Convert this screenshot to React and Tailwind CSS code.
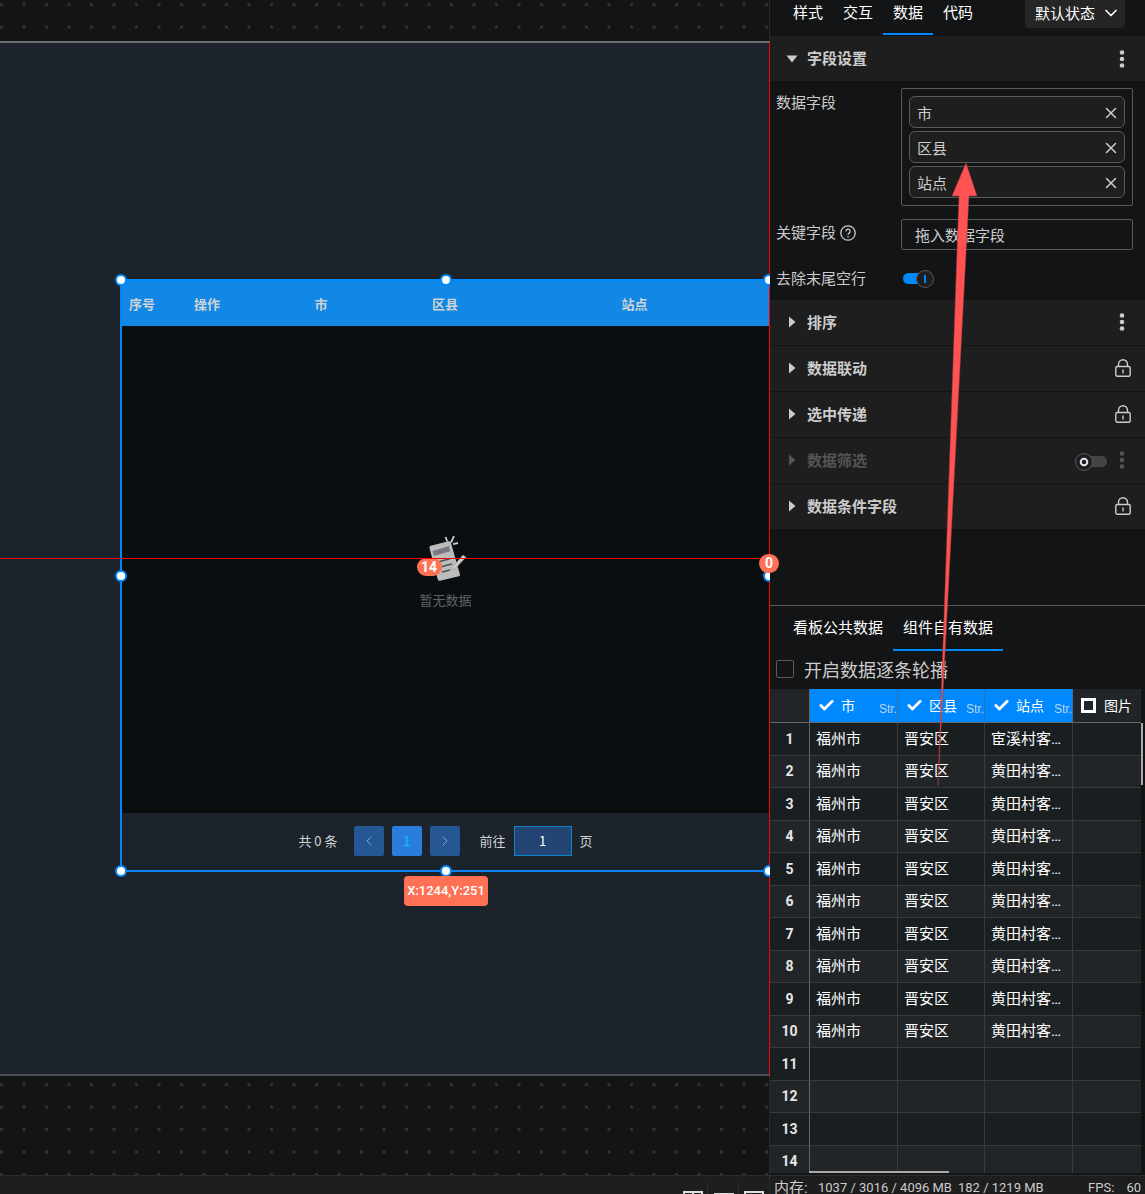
import { Check, ChevronDown, ChevronLeft, ChevronRight, X } from "lucide-react";

const stateTabs = ["样式", "交互", "数据", "代码"];
const dataTabs = ["看板公共数据", "组件自有数据"];
const fields = ["市", "区县", "站点"];

const sections = [
  { title: "排序", action: "menu" },
  { title: "数据联动", action: "lock" },
  { title: "选中传递", action: "lock" },
  { title: "数据筛选", action: "toggle" },
  { title: "数据条件字段", action: "lock" },
];

const columns = [
  { name: "市", checked: true },
  { name: "区县", checked: true },
  { name: "站点", checked: true },
  { name: "图片", checked: false },
];

const rows = Array.from({ length: 14 }, (_, i) => {
  if (i > 9) return ["", "", "", ""];
  return ["福州市", "晋安区", i === 0 ? "宦溪村客运站" : "黄田村客运站", ""];
});

function DotsIcon() {
  return (
    <svg viewBox="0 0 6 18" className="h-[18px] w-[6px]" fill="currentColor">
      <circle cx="3" cy="2.5" r="2.3" />
      <circle cx="3" cy="9" r="2.3" />
      <circle cx="3" cy="15.5" r="2.3" />
    </svg>
  );
}

function LockIcon() {
  return (
    <svg viewBox="0 0 16 18" className="h-[18px] w-4" fill="none" stroke="currentColor" strokeWidth="1.4">
      <rect x="0.8" y="7.5" width="14.4" height="9.8" rx="1.5" />
      <path d="M3.5 7.5V5.2a4.5 4.5 0 0 1 9 0v2.3M8 10.5v4" />
    </svg>
  );
}

function Arrow({ open }) {
  return open ? (
    <svg viewBox="0 0 12 8" className="h-2 w-3" fill="currentColor">
      <path d="M0.5 0.5h11L6 7.5z" />
    </svg>
  ) : (
    <svg viewBox="0 0 12 12" className="h-3 w-3" fill="currentColor">
      <path d="M3 0.5v11L9.5 6z" />
    </svg>
  );
}

function EmptyIcon() {
  return (
    <svg viewBox="0 0 50 46" className="h-[46px] w-[50px]">
      <path d="M8.500 12q-.5-1.800 1.300-2.300L27.500 5.200q1.800-.4 2.300 1.400L39 38.500q.3 1.400-1.100 1.800L19 44.800q-1.700.3-2.200-1.300z" fill="#bcbcbc" />
      <path d="M11.500 15l16.500-5 1.400 5.200L13 19.800z" fill="#777a80" />
      <path d="M15 26.500l14-3.800M19 31l12-3M21 36l8-2" stroke="#4c4f54" strokeWidth="1.5" fill="none" />
      <path d="M31 31.500L42 19l3 2.200-11 11.500-4 1.600z" fill="#cdcdcd" stroke="#8a8a8a" strokeWidth="0.5" />
      <path d="M24.500 1l1.800 4.500M33 0l-3 6.500M37 7l-5 1.200" stroke="#c9c9c9" strokeWidth="1.8" />
    </svg>
  );
}

function Handle({ className }) {
  return <i className={`absolute size-3 rounded-full border-2 border-[#0088ff] bg-white ${className}`} />;
}

function BoardTable() {
  return (
    <div className="relative flex flex-col border-b-2 border-l-2 border-[#0a84f5] bg-[#0a0e11] text-[13px]">
      <table className="w-full table-fixed bg-[#1187e6] text-[#cfd3d6]">
        <colgroup>
          <col className="w-[40px]" />
          <col className="w-[90px]" />
          <col className="w-[138px]" />
          <col className="w-[110px]" />
          <col />
        </colgroup>
        <thead>
          <tr className="h-[46px] border-t-2 border-[#0088ff]">
            {["序号", "操作", "市", "区县", "站点"].map((name) => (
              <th key={name} className="whitespace-nowrap font-bold">{name}</th>
            ))}
          </tr>
        </thead>
      </table>
      <div className="flex h-[487px] flex-col items-center justify-center gap-2 pt-1.5">
        <div className="relative">
          <EmptyIcon />
          <span className="absolute top-[22px] -left-1 h-[18px] w-[25px] rounded-full bg-[#ff7154] text-center font-[Roboto,sans-serif] text-sm leading-[18px] font-bold text-white">
            14
          </span>
        </div>
        <p className="text-[#5f6467]">暂无数据</p>
      </div>
      <div className="flex h-[57px] items-center justify-center bg-[#1c232a] pb-0.5 text-[#cfd3d6]">
        <span>共 0 条</span>
        <div className="mr-5 ml-4 flex gap-2">
          <button aria-label="上一页" className="flex size-[30px] items-center justify-center rounded-xs bg-[#265795] text-[#8ba5c9]">
            <ChevronLeft size={16} strokeWidth={1.5} />
          </button>
          <button className="size-[30px] rounded-xs bg-[#287ddd] text-[#12c8ff]">1</button>
          <button aria-label="下一页" className="flex size-[30px] items-center justify-center rounded-xs bg-[#265795] text-[#8ba5c9]">
            <ChevronRight size={16} strokeWidth={1.5} />
          </button>
        </div>
        <label className="flex items-center gap-2">
          前往
          <input defaultValue="1" className="h-[30px] w-[58px] border border-[#0b86cc] bg-[#234573] text-center text-white" />
          页
        </label>
      </div>
      <Handle className="-top-[5px] -left-[7px]" />
      <Handle className="-top-[5px] left-[318px]" />
      <Handle className="-top-[5px] -right-[6px]" />
      <Handle className="top-[291px] -left-[7px]" />
      <Handle className="top-[291px] -right-[6px]" />
      <Handle className="-bottom-[7px] -left-[7px]" />
      <Handle className="-bottom-[7px] left-[318px]" />
      <Handle className="-right-[6px] -bottom-[7px]" />
      <span className="absolute -bottom-9 left-[282px] h-[30px] w-[84px] rounded-sm bg-[#ff7154] text-center font-[Roboto,sans-serif] text-[13px] leading-[30px] font-medium whitespace-nowrap text-white">
        X:1244,Y:251
      </span>
    </div>
  );
}

function Stage() {
  return (
    <main className="relative flex min-w-0 flex-1 flex-col border-r border-[#27292b] pt-[41px] pb-[99px]">
      <svg className="absolute inset-0 size-full">
        <defs>
          <pattern id="dots" width="22.5" height="22.5" patternUnits="userSpaceOnUse">
            <rect x="0" y="3" width="3" height="3" fill="#303234" />
          </pattern>
        </defs>
        <rect width="100%" height="100%" fill="url(#dots)" />
      </svg>
      <div className="relative -mr-px flex-1 border-t-2 border-r border-b-2 border-t-[#6d7072] border-r-[#ff0000] border-b-[#4c5052] bg-[#1c232a] pt-[236px] pl-[120px]">
        <BoardTable />
        <div className="absolute inset-x-0 top-[515px] h-px bg-[#ff0000]" />
        <span className="absolute top-[511px] -right-[10px] z-10 h-[19px] w-5 rounded-full bg-[#ff7154] text-center font-[Roboto,sans-serif] text-sm leading-[19px] font-bold text-white">
          0
        </span>
      </div>
    </main>
  );
}

function FieldSettings() {
  return (
    <section>
      <h2 className="flex h-[45px] items-center bg-[#1e1e1e] pr-5 pl-4 font-bold">
        <Arrow open />
        <span className="ml-[9px] flex-1">字段设置</span>
        <button aria-label="更多"><DotsIcon /></button>
      </h2>
      <div className="grid grid-cols-[125px_1fr] pt-[7px] pr-3 pb-2.5 pl-1.5">
        <span className="pt-[3px]">数据字段</span>
        <ul className="flex flex-col gap-[3px] rounded-xs border border-[#58595b] p-[7px]">
          {fields.map((field) => (
            <li key={field} className="flex h-8 items-center justify-between rounded-md border border-[#58595b] bg-[#1e1e1e] pt-0.5 pr-1 pl-[7px]">
              {field}
              <button aria-label={`移除${field}`}><X size={18} /></button>
            </li>
          ))}
        </ul>
        <label htmlFor="keyField" className="mt-[13px] flex items-center gap-1 pb-1">
          关键字段
          <svg viewBox="0 0 16 16" className="size-4" fill="none" stroke="currentColor" strokeWidth="1.3">
            <circle cx="8" cy="8" r="7.2" />
            <path d="M5.900 6.400a2.100 2.100 0 1 1 3.200 1.700c-.8.500-1.100.8-1.100 1.600M8 11v1.400" />
          </svg>
        </label>
        <input
          id="keyField"
          placeholder="拖入数据字段"
          className="mt-[13px] h-[31px] w-full rounded-xs border border-[#58595b] bg-transparent px-[13px] placeholder:text-[#cccccc]"
        />
        <label htmlFor="trimRows" className="mt-[17px]">去除末尾空行</label>
        <span className="relative mt-5 ml-0.5 h-[18px] w-8">
          <input id="trimRows" type="checkbox" role="switch" defaultChecked className="sr-only" />
          <svg viewBox="0 0 32 18" className="h-[18px] w-8">
            <rect x="0" y="3" width="24" height="11" rx="5.5" fill="#0088ff" />
            <circle cx="22" cy="9" r="8.5" fill="#1e1e1e" stroke="#58595b" />
            <path d="M22 5v8" stroke="#0088ff" strokeWidth="2" />
          </svg>
        </span>
      </div>
    </section>
  );
}

function Section({ title, action }) {
  const off = action === "toggle";
  return (
    <h2 className={`flex h-[45px] items-center bg-[#1e1e1e] pl-4 font-bold ${off ? "text-[#555555]" : ""} ${action === "lock" ? "pr-3.5" : "pr-5"}`}>
      <Arrow />
      <span className="ml-[9px] flex-1">{title}</span>
      {off && (
        <label className="relative mr-3">
          <input type="checkbox" role="switch" aria-label={title} className="sr-only" />
          <svg viewBox="0 0 32 18" className="mt-1 h-[18px] w-8">
            <rect x="8" y="3" width="24" height="11" rx="5.5" fill="#444444" />
            <circle cx="9" cy="9" r="8.5" fill="#1e1e1e" stroke="#58595b" />
            <circle cx="9" cy="9" r="3.3" fill="none" stroke="#e0e6f0" strokeWidth="2" />
          </svg>
        </label>
      )}
      <button aria-label={`${title}设置`}>{action === "lock" ? <LockIcon /> : <DotsIcon />}</button>
    </h2>
  );
}

function DataGrid() {
  return (
    <div className="relative min-h-0 flex-1 pr-1">
      <div className="h-full overflow-hidden">
        <table className="w-[391px] table-fixed border-separate border-spacing-0 text-white">
          <colgroup>
            <col className="w-[40px]" />
            <col className="w-[88px]" />
            <col className="w-[87px]" />
            <col className="w-[88px]" />
            <col className="w-[88px]" />
          </colgroup>
          <thead>
            <tr className="h-[34px]">
              <th className="border-r border-b border-[#666666] bg-[#222527]" />
              {columns.map((col) => (
                <th
                  key={col.name}
                  className={`border-r border-b border-b-[#666666] p-0 text-sm font-normal ${
                    col.checked ? "border-r-[#3a6ea5] bg-[#0088ff]" : "border-r-[#3a3a3a] bg-[#222527]"
                  }`}
                >
                  <label className="relative flex items-center pl-2 whitespace-nowrap">
                    <input type="checkbox" defaultChecked={col.checked} className="sr-only" />
                    {col.checked ? (
                      <Check size={17} strokeWidth={4} />
                    ) : (
                      <span className="mr-0.5 size-[15px] shrink-0 border-[3px] border-white" />
                    )}
                    <span className="ml-1.5 flex-1 text-left">{col.name}</span>
                    <span className="pt-2 font-['Liberation_Sans',sans-serif] text-xs text-[#bcd4ea]">Str.</span>
                  </label>
                </th>
              ))}
            </tr>
          </thead>
          <tbody>
            {rows.map((row, i) => (
              <tr key={i} className={i % 2 ? "h-8 bg-[#222527]" : "h-[33px] bg-[#191e20]"}>
                <th className="border-r border-b border-r-[#666666] border-b-[#3a3a3a] p-0 font-[Roboto,sans-serif] text-sm font-bold text-[#e6e6e6]">
                  {i + 1}
                </th>
                {row.map((cell, j) => (
                  <td
                    key={j}
                    className="truncate border-r border-b border-[#3a3a3a] py-0 pr-1 pl-1.5 font-[Roboto,'Noto_Sans_CJK_SC',sans-serif] leading-5"
                  >
                    {cell}
                  </td>
                ))}
              </tr>
            ))}
          </tbody>
        </table>
      </div>
      <div className="absolute top-[34px] right-0.5 h-[62px] w-0.5 bg-[#aaaaaa]" />
      <div className="absolute bottom-0 left-[39px] h-0.5 w-[140px] bg-[#aaaaaa]" />
    </div>
  );
}

function Inspector() {
  return (
    <aside className="relative flex w-[375px] shrink-0 flex-col bg-[#131416]">
      <div className="flex h-9 items-start pr-5 pl-[13px] text-white">
        {stateTabs.map((tab) => (
          <button
            key={tab}
            className={`h-[35px] w-[50px] border-b-2 pb-2 ${tab === "数据" ? "border-[#0088ff]" : "border-transparent"}`}
          >
            {tab}
          </button>
        ))}
        <div className="relative ml-auto">
          <select aria-label="状态" className="h-7 w-[100px] appearance-none rounded-b-sm bg-[#252525] pb-0.5 pl-[10px]">
            <option>默认状态</option>
          </select>
          <ChevronDown size={20} className="pointer-events-none absolute top-[3px] right-1" />
        </div>
      </div>
      <div className="pb-[76px]">
        <FieldSettings />
        <div className="flex flex-col gap-px">
          {sections.map((section) => (
            <Section key={section.title} {...section} />
          ))}
        </div>
      </div>
      <div className="flex min-h-0 flex-1 flex-col border-t border-[#58595b]">
        <div className="flex pl-[13px] text-white">
          {dataTabs.map((tab) => (
            <button
              key={tab}
              className={`h-[45px] w-[110px] border-b-2 ${tab === "组件自有数据" ? "border-[#0088ff]" : "border-transparent"}`}
            >
              {tab}
            </button>
          ))}
        </div>
        <label className="flex h-[38px] items-center gap-2.5 pb-0.5 pl-1.5 text-lg">
          <input type="checkbox" className="size-[18px] appearance-none rounded-xs border border-[#58595b]" />
          开启数据逐条轮播
        </label>
        <DataGrid />
        <div className="h-0.5 shrink-0" />
      </div>
      {/* Drag hint from the grid column to the field list */}
      <svg className="pointer-events-none absolute inset-0 size-full">
        <path d="M196 163L207 196H199L168 786L189 196H182z" fill="#ff5252" stroke="#a33b3d" strokeWidth="0.5" />
      </svg>
    </aside>
  );
}

function StatusBar() {
  return (
    <footer className="flex h-[19px] shrink-0 overflow-hidden border-t border-[#2b2c2e] bg-[#1e1e1e]">
      <div className="flex flex-1 justify-end border-r border-[#27292b] pt-1.5 text-[#dddddd]">
        <button aria-label="分栏" className="w-[31px] border-r border-[#2b2c2e] pt-[9px] pl-1.5">
          <svg viewBox="0 0 20 18" className="h-[18px] w-5" fill="none" stroke="currentColor" strokeWidth="2">
            <path d="M1 1h18v16H1zM10 1v16" />
          </svg>
        </button>
        <button aria-label="列表" className="w-[31px] border-r border-[#2b2c2e] pt-[9px] pl-1.5">
          <svg viewBox="0 0 20 18" className="h-[18px] w-5" fill="none" stroke="currentColor" strokeWidth="2">
            <path d="M0 3h20M0 15h20" />
          </svg>
        </button>
        <button aria-label="窗口" className="w-[30px] pt-[9px] pl-[5px]">
          <svg viewBox="0 0 20 18" className="h-[18px] w-5" fill="none" stroke="currentColor" strokeWidth="2">
            <path d="M1 1h18v16H1zM3 5h14" />
          </svg>
        </button>
      </div>
      <div className="flex h-6 w-[375px] items-center pr-1 pl-1 font-[Roboto,'Noto_Sans_CJK_SC',sans-serif] text-[13px] whitespace-nowrap">
        <span className="w-11 text-[15px]">内存:</span>
        <span>1037 / 3016 / 4096 MB</span>
        <span className="ml-1.5">182 / 1219 MB</span>
        <span className="ml-auto">FPS:</span>
        <span className="ml-3">60</span>
      </div>
    </footer>
  );
}

export default function App() {
  return (
    <div className="flex h-screen flex-col overflow-hidden bg-[#131416] font-['Noto_Sans_CJK_SC',sans-serif] text-[15px] text-[#cccccc]">
      <div className="flex min-h-0 flex-1">
        <Stage />
        <Inspector />
      </div>
      <StatusBar />
    </div>
  );
}
